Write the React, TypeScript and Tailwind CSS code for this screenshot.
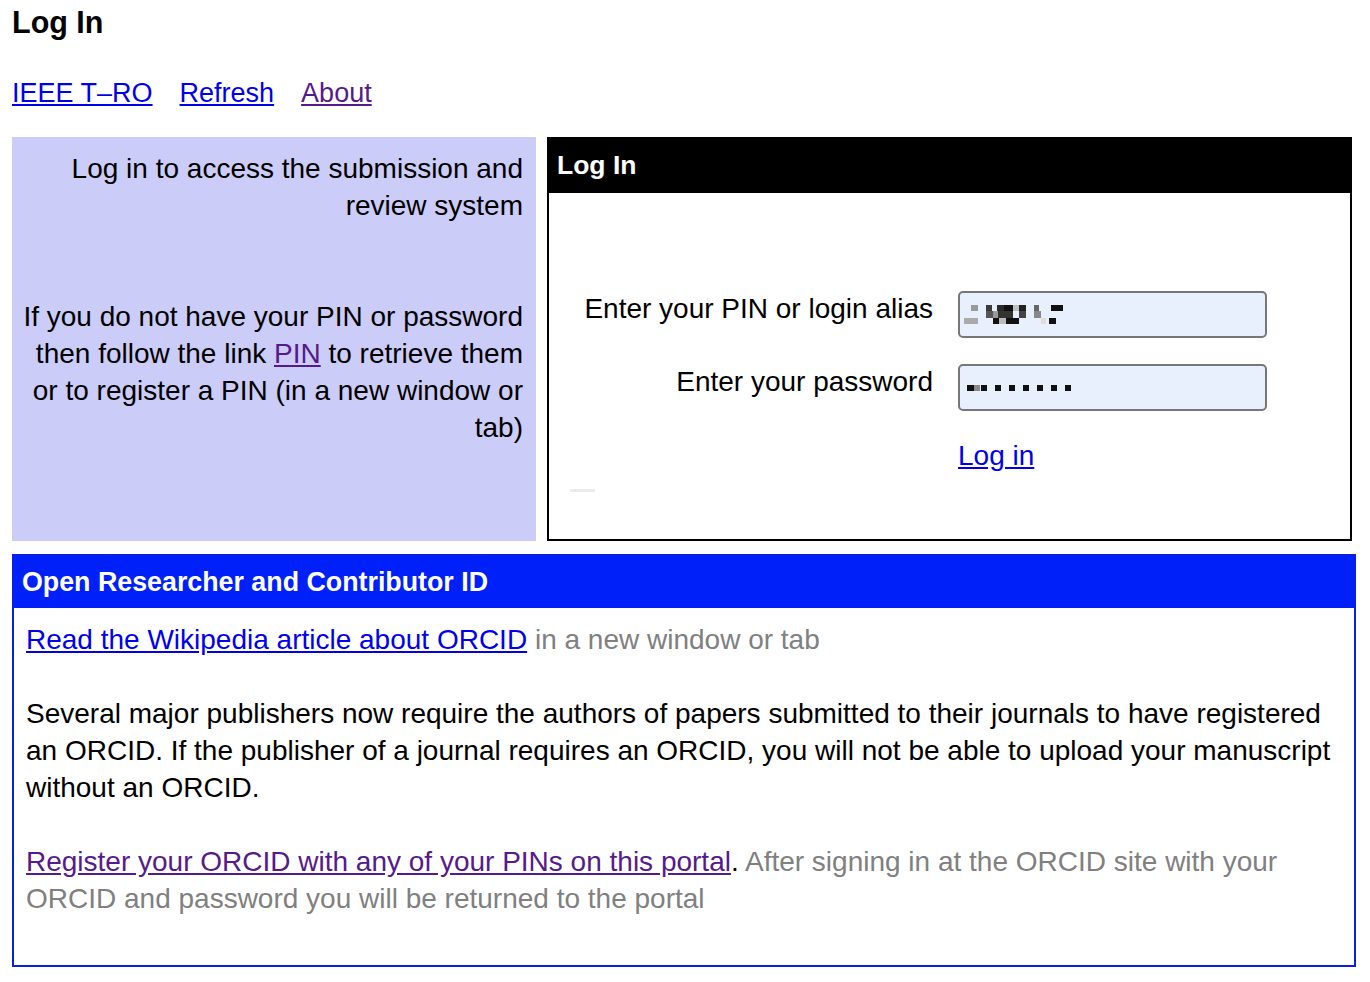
import React from 'react';

const PinMosaic: React.FC = () => (
  <svg width="104" height="20" viewBox="0 0 104 20" aria-hidden="true">
    {/* redacted login alias, pixelated */}
    <rect x="9" y="0" width="7" height="6" fill="#9a9a9a" />
    <rect x="24" y="0" width="6" height="6" fill="#3a3a3a" />
    <rect x="35" y="0" width="7" height="6" fill="#2a2a2a" />
    <rect x="42" y="0" width="9" height="6" fill="#111" />
    <rect x="51" y="0" width="6" height="6" fill="#c0c0c0" />
    <rect x="57" y="0" width="7" height="6" fill="#222" />
    <rect x="72" y="0" width="5" height="6" fill="#666" />
    <rect x="89" y="0" width="12" height="6" fill="#111" />
    <rect x="24" y="6" width="7" height="7" fill="#555" />
    <rect x="31" y="6" width="5" height="7" fill="#999" />
    <rect x="36" y="6" width="15" height="7" fill="#333" />
    <rect x="57" y="6" width="7" height="7" fill="#444" />
    <rect x="72" y="6" width="7" height="7" fill="#888" />
    <rect x="2" y="13" width="14" height="6" fill="#aaa" />
    <rect x="31" y="13" width="6" height="6" fill="#111" />
    <rect x="37" y="13" width="7" height="6" fill="#bbb" />
    <rect x="44" y="13" width="13" height="6" fill="#111" />
    <rect x="79" y="13" width="5" height="6" fill="#ddd" />
    <rect x="87" y="13" width="7" height="6" fill="#111" />
  </svg>
);

const PasswordDots: React.FC = () => {
  const xs = [0, 14, 28, 42, 56, 70, 84, 98];
  return (
    <svg width="106" height="8" viewBox="0 0 106 8" aria-hidden="true">
      <rect x="0" y="1" width="7" height="6" fill="#111" />
      <rect x="7" y="1" width="6" height="6" fill="#8a8a8a" />
      {xs.slice(1).map((x) => (
        <rect key={x} x={x} y="1" width="6" height="6" fill="#111" />
      ))}
    </svg>
  );
};

const App: React.FC = () => {
  return (
    <div className="min-h-screen bg-white text-black font-['Liberation_Sans',Arial,sans-serif]">
      <div className="px-[12px]">
        <h1 className="text-[30.5px] leading-[44px] font-bold">Log In</h1>

        <nav className="mt-[31px] flex gap-[27px] text-[27px] leading-[37px]">
          <a href="#" className="text-[#0000ee] underline">IEEE T–RO</a>
          <a href="#" className="text-[#0000ee] underline">Refresh</a>
          <a href="#" className="text-[#551a8b] underline">About</a>
        </nav>

        <div className="mt-[25px] flex h-[404px] gap-[11px]">
          <div className="w-[524px] shrink-0 bg-[#ccccf8] pt-[13px] pl-[4px] pr-[13px] text-right text-[28px] leading-[37px]">
            <p>Log in to access the submission and review system</p>
            <p className="mt-[74px]">
              If you do not have your PIN or password then follow the link{' '}
              <a href="#" className="text-[#551a8b] underline">PIN</a> to retrieve them or to register a PIN (in a new
              window or tab)
            </p>
          </div>

          <div className="w-[805px] shrink-0 border-2 border-black">
            <div className="flex h-[54px] items-center bg-black pl-[8px] text-[26.5px] font-bold text-white">Log In</div>
            <form className="pt-[97px] text-[28px] leading-[37px]" onSubmit={(e) => e.preventDefault()}>
              <div className="flex items-start">
                <label className="w-[384px] shrink-0 text-right">Enter your PIN or login alias</label>
                <div className="ml-[25px] mt-[1px] flex h-[47px] w-[309px] items-center rounded-[5px] border-2 border-[#777] bg-[#e8f0fe] pl-[2px]">
                  <PinMosaic />
                </div>
              </div>
              <div className="mt-[25px] flex items-start">
                <label className="w-[384px] shrink-0 text-right">Enter your password</label>
                <div className="ml-[25px] mt-[1px] flex h-[47px] w-[309px] items-center rounded-[5px] border-2 border-[#777] bg-[#e8f0fe] pl-[7px]">
                  <PasswordDots />
                </div>
              </div>
              <div className="mt-[26px] pl-[409px]">
                <a href="#" className="text-[#0000ee] underline">Log in</a>
              </div>
              <div className="ml-[21px] mt-[15px] h-[3px] w-[25px] bg-[#ebebeb]" />
            </form>
          </div>
        </div>

        <section className="mt-[13px] w-[1344px] border-2 border-[#0a1fe6]">
          <div className="flex h-[52px] items-center bg-[#0020fa] pl-[8px] text-[26.8px] font-bold text-white">
            Open Researcher and Contributor ID
          </div>
          <div className="pt-[13px] pb-[48px] pl-[12px] pr-[12px] text-[28px] leading-[37px]">
            <p className="text-[#808080]">
              <a href="#" className="text-[#0000ee] underline">Read the Wikipedia article about ORCID</a> in a new window or tab
            </p>
            <p className="mt-[37px]">
              Several major publishers now require the authors of papers submitted to their journals to have registered an
              ORCID. If the publisher of a journal requires an ORCID, you will not be able to upload your manuscript without
              an ORCID.
            </p>
            <p className="mt-[37px] text-[#808080]">
              <a href="#" className="text-[#551a8b] underline">Register your ORCID with any of your PINs on this portal</a>
              <span className="text-black">.</span> After signing in at the ORCID site with your ORCID and password you will be
              returned to the portal
            </p>
          </div>
        </section>
      </div>
    </div>
  );
};

export default App;
